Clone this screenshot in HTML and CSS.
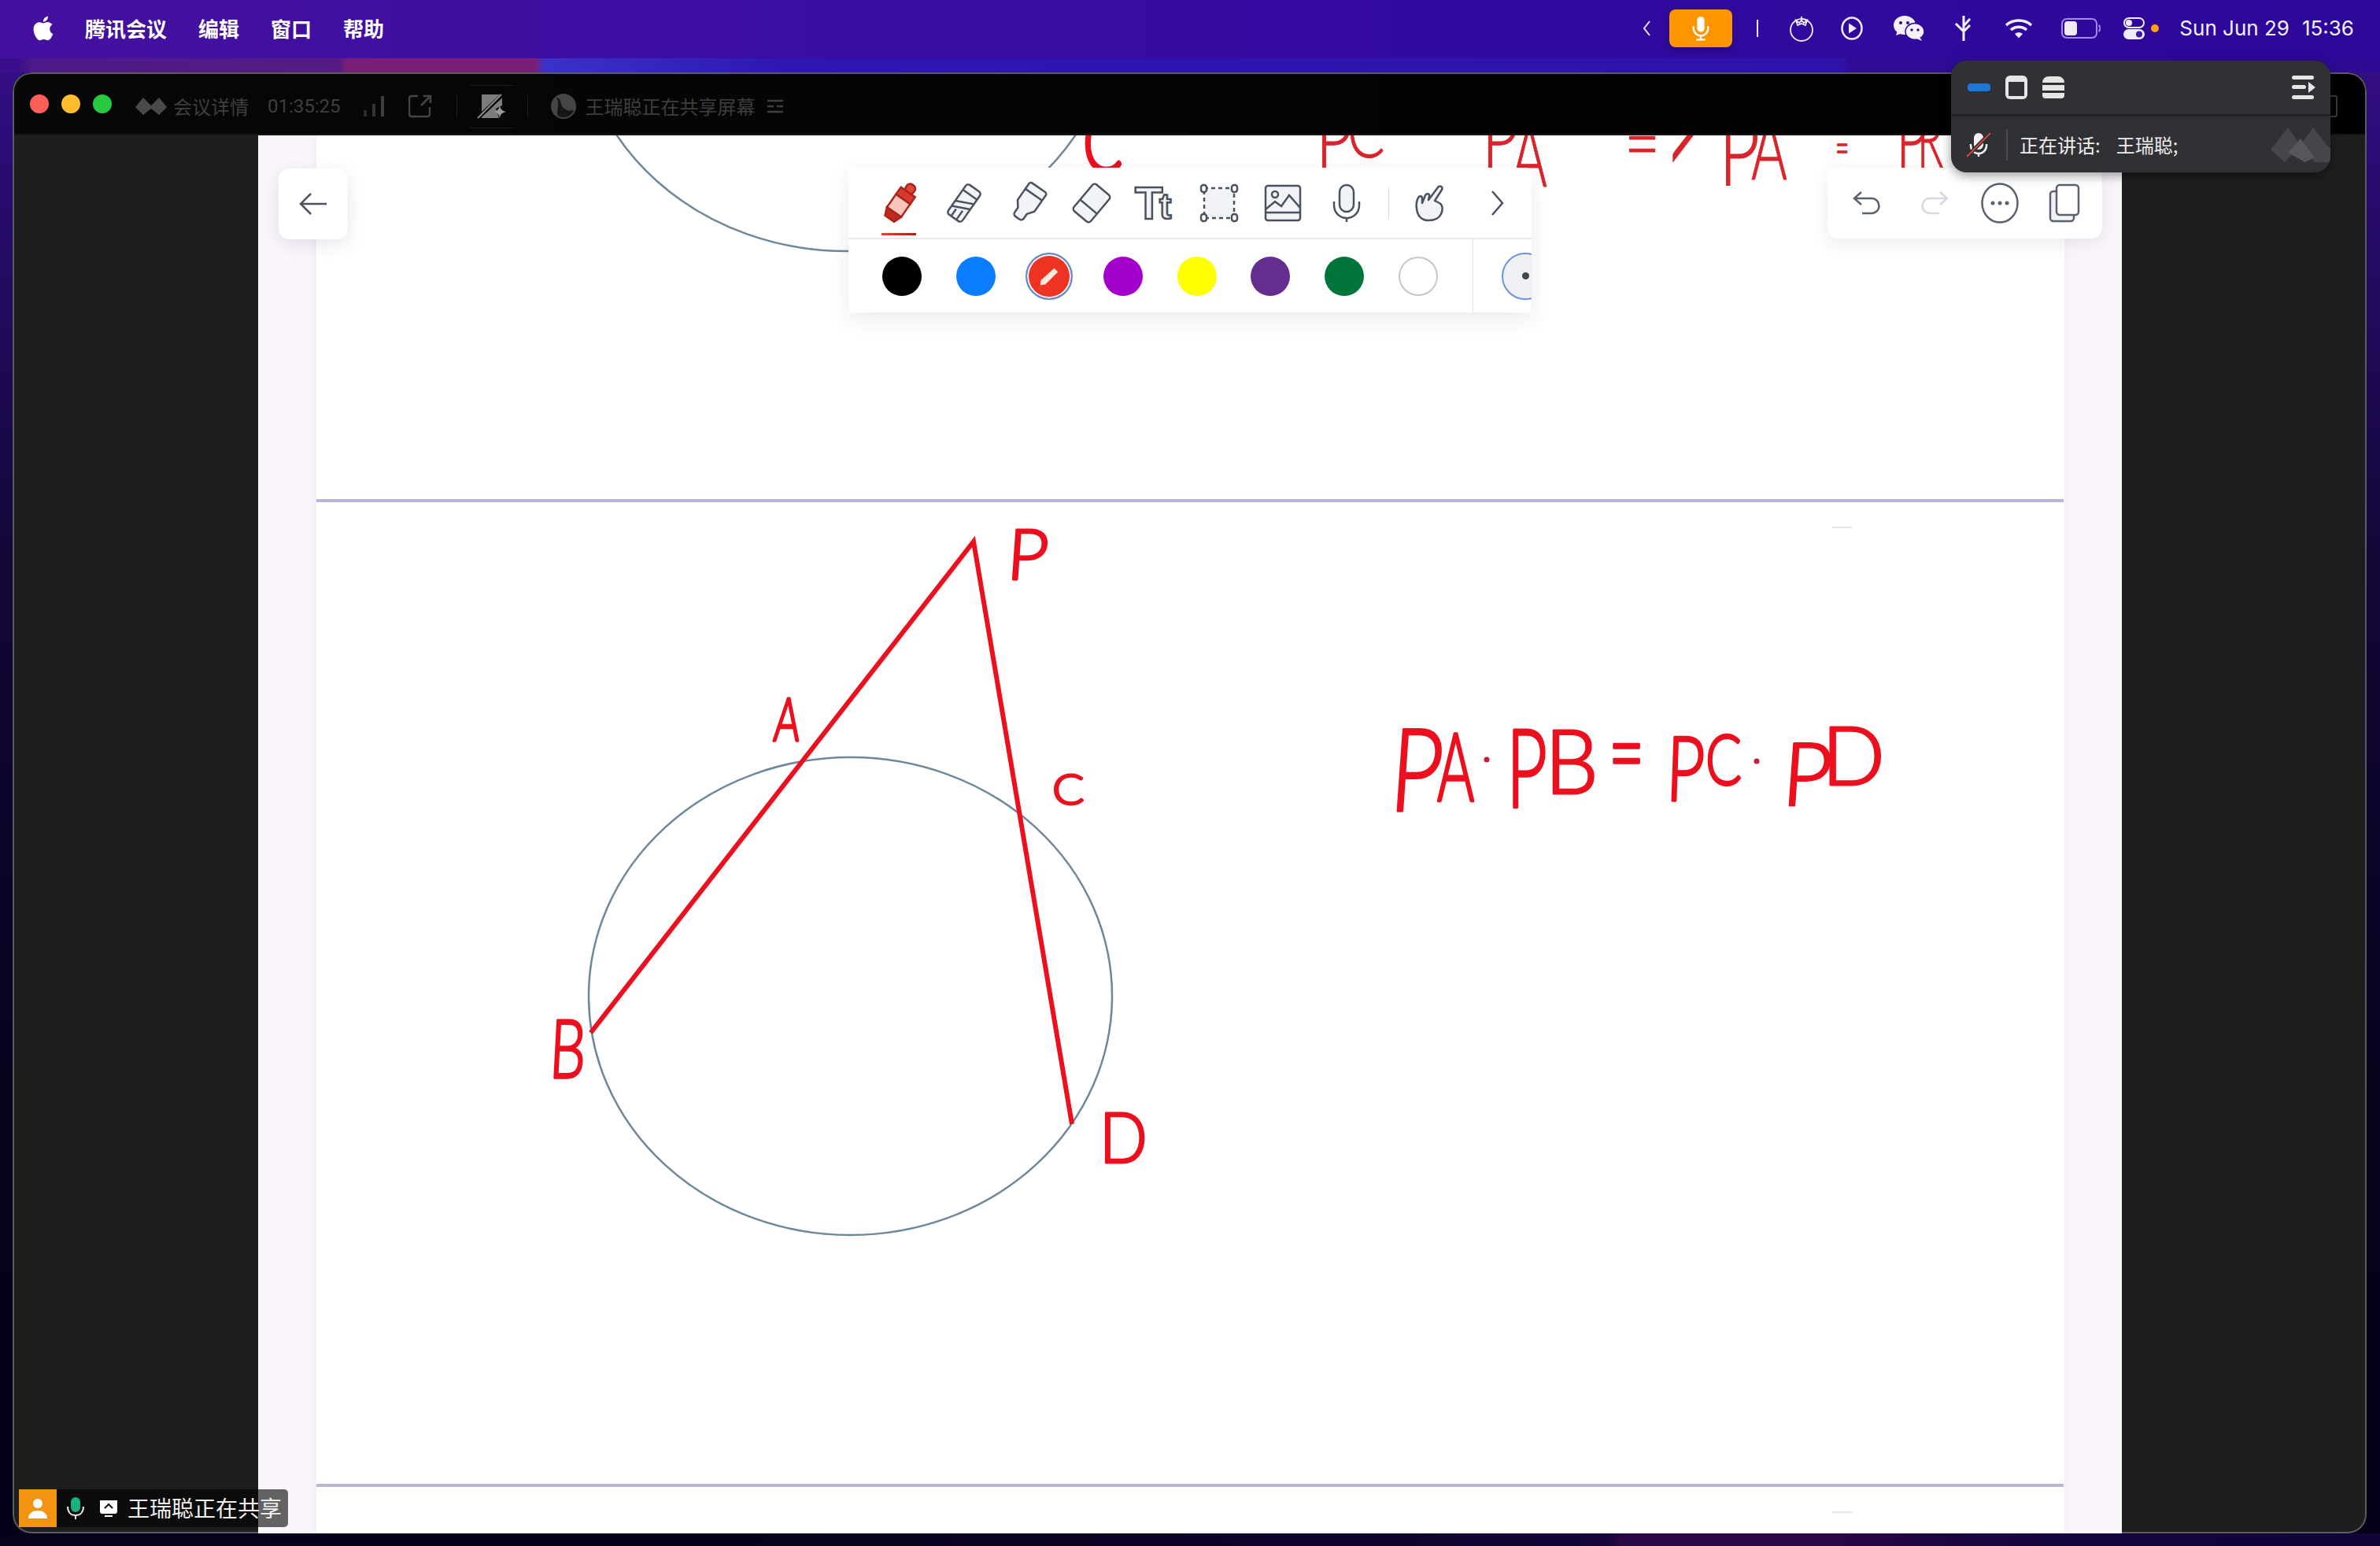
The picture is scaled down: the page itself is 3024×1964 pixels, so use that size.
FILE: index.html
```html
<!DOCTYPE html>
<html lang="zh">
<head>
<meta charset="utf-8">
<title>腾讯会议</title>
<link rel="stylesheet" href="styles.css">
</head>
<body>
<header class="menubar">
  <nav class="menu-left">
    <svg class="apple" viewBox="3 1.5 18 21"><path fill="#fff" d="M18.71 19.5c-.83 1.24-1.71 2.45-3.05 2.47-1.34.03-1.77-.79-3.29-.79-1.53 0-2 .77-3.27.82-1.31.05-2.3-1.32-3.14-2.53C4.25 17 2.94 12.45 4.7 9.39c.87-1.52 2.43-2.48 4.12-2.51 1.28-.02 2.5.87 3.29.87.78 0 2.26-1.07 3.8-.91.65.03 2.47.26 3.64 1.98-.09.06-2.17 1.28-2.15 3.81.03 3.02 2.65 4.03 2.68 4.04-.03.07-.42 1.44-1.38 2.83M13 3.5c.73-.83 1.94-1.46 2.94-1.5.13 1.17-.34 2.35-1.04 3.19-.69.85-1.83 1.51-2.95 1.42-.15-1.15.41-2.35 1.05-3.11z"/></svg>
    <span class="menu-app">腾讯会议</span><span class="menu-item">编辑</span><span class="menu-item">窗口</span><span class="menu-item">帮助</span>
  </nav>
  <div class="menu-right">
    <svg class="st st-chev" viewBox="0 0 12 24"><path d="M10 3 3 12l7 9" fill="none" stroke="#e8e4f6" stroke-width="2"/></svg>
    <div class="mic-pill"><svg class="mic-pill-icon" viewBox="0 0 28 34"><rect x="9" y="1" width="10" height="21" rx="5" fill="#fff"/><path d="M4 14v3a10 10 0 0 0 20 0v-3M14 27v5M8 32.500h12" fill="none" stroke="#fff" stroke-width="2.500"/></svg></div>
    <span class="st-bar"></span>
    <svg class="st st-tomato" viewBox="0 0 32 34"><g fill="none" stroke="#f0ecfa" stroke-width="1.800"><circle cx="16" cy="19" r="14"/><path d="M16 2v6M9 7l4 3 3-3 3 3 4-3-2 6-5-2-5 2z"/></g></svg>
    <svg class="st st-play" viewBox="0 0 28 30"><ellipse cx="14" cy="15" rx="12.500" ry="13.500" fill="none" stroke="#f0ecfa" stroke-width="2.500"/><path d="M10 8.500 20 15l-10 6.500z" fill="#f0ecfa"/></svg>
    <svg class="st st-wechat" viewBox="0 0 40 34"><ellipse cx="15" cy="13" rx="14" ry="12" fill="#f4f1fb"/><path d="m6 20-2 6 8-3z" fill="#f4f1fb"/><ellipse cx="28" cy="21" rx="12" ry="10.500" fill="#f4f1fb" stroke="#2e0798" stroke-width="1.500"/><path d="m34 28 3 5-7-3z" fill="#f4f1fb"/><circle cx="10" cy="10" r="2" fill="#2e0798"/><circle cx="19" cy="10" r="2" fill="#2e0798"/><circle cx="24" cy="19" r="1.700" fill="#2e0798"/><circle cx="32" cy="19" r="1.700" fill="#2e0798"/></svg>
    <svg class="st st-fork" viewBox="0 0 26 34"><path d="M13 1v32M13 14 21 5M13 21 21 13M13 21 3 11" fill="none" stroke="#f4f1fb" stroke-width="3"/></svg>
    <svg class="st st-wifi" viewBox="0 0 36 26"><g fill="none" stroke="#f4f1fb" stroke-width="3.500"><path d="M2 9c9-8 23-8 32 0"/><path d="M8 15c6-5 14-5 20 0"/></g><path d="M13 20c3-2.500 7-2.500 10 0l-5 5.500z" fill="#f4f1fb"/></svg>
    <svg class="st st-battery" viewBox="0 0 50 26"><rect x="1" y="1" width="44" height="24" rx="6" fill="none" stroke="#9f8be8" stroke-width="2"/><rect x="4" y="4" width="16" height="18" rx="4" fill="#eeeaf8"/><path d="M47.500 9a5 5 0 0 1 0 8" fill="none" stroke="#9f8be8" stroke-width="2"/></svg>
    <svg class="st st-toggle" viewBox="0 0 27 28"><rect x="1" y="1" width="25" height="12" rx="6" fill="none" stroke="#f0ecfa" stroke-width="2"/><circle cx="7" cy="7" r="4" fill="#f0ecfa"/><rect y="15" width="27" height="13" rx="6.500" fill="#f0ecfa"/><circle cx="20" cy="21.500" r="4" fill="#3a1aa6"/></svg>
    <span class="st-dot"></span>
    <time class="clock"><span>Sun Jun 29</span><span>15:36</span></time>
  </div>
</header>

<div class="wallstrip"></div>

<main class="window">
  <div class="titlebar">
    <span class="light light-red"></span><span class="light light-yellow"></span><span class="light light-green"></span>
    <svg class="tb-logo" viewBox="0 0 40 22"><path d="M0 12 10 0l10 10L30 0l10 12-10 10-10-8-10 8z" fill="#4a4a4a"/></svg>
    <span class="tb-label">会议详情</span>
    <span class="tb-time">01:35:25</span>
    <svg class="tb-signal" viewBox="0 0 27 26"><rect y="18" width="4" height="8" fill="#2a2a2a"/><rect x="11" y="10" width="4" height="16" fill="#343434"/><rect x="22" width="4" height="26" fill="#3e3e3e"/></svg>
    <svg class="tb-share" viewBox="0 0 30 30"><path d="M12 2H4a3 3 0 0 0-3 3v20a3 3 0 0 0 3 3h20a3 3 0 0 0 3-3v-9M16 14 28 2M19 2h9v9" fill="none" stroke="#444" stroke-width="2.500"/></svg>
    <span class="tb-sep tb-sep-a"></span>
    <span class="tb-focus"><svg class="tb-focus-icon" viewBox="0 0 38 32"><path d="M6 1h26v14l-8 4 4 12H6z" fill="#7c7c7c"/><path d="M1 31 33 1" stroke="#050505" stroke-width="5"/><path d="M1 31 31 1" stroke="#8c8c8c" stroke-width="2"/><path d="M29 15c1 5 3 7 8 8-5 1-7 3-8 8-1-5-3-7-8-8 5-1 7-3 8-8z" fill="#9a9a9a"/></svg></span>
    <span class="tb-sep tb-sep-b"></span>
    <svg class="tb-avatar" viewBox="0 0 34 34"><circle cx="17" cy="17" r="16" fill="#454545"/><path d="M8 6c7 0 4 10 10 14s9 2 12 2c-3 8-13 12-20 7-3-6 3-14-2-23z" fill="#161616"/></svg>
    <span class="tb-share-label">王瑞聪正在共享屏幕</span>
    <svg class="tb-more" viewBox="0 0 20 18"><path d="M0 2h20M0 9h8M12 9h8M0 16h20" stroke="#3f3f3f" stroke-width="2.500"/></svg>
    <span class="tb-full"></span>
  </div>

  <div class="body-row">
    <aside class="side"></aside>
    <section class="stage">
      <div class="page"></div>

      <svg class="board" viewBox="328 172 2368 1776">
        <line class="rule" x1="402" y1="636" x2="2622" y2="636"/>
        <line class="rule" x1="402" y1="1887" x2="2622" y2="1887"/>
        <line class="ghost" x1="2328" y1="670" x2="2353" y2="670"/>
        <line class="ghost" x1="2328" y1="1921" x2="2353" y2="1921"/>
        <ellipse class="circle" cx="1075" cy="15" rx="340" ry="304"/>
        <ellipse class="circle" cx="1080.500" cy="1265.500" rx="332.500" ry="303.500"/>
        <path class="seg" d="M750.500 1312 1237 688 1362 1428"/>
        <g class="ink">
          <text transform="translate(1278 736) skewX(-4) scale(.9 .89)">P</text>
          <text transform="translate(982 941) skewX(-4) scale(.5 .76)">A</text>
          <text transform="translate(1337 1022) scale(.6 .53)">C</text>
          <text transform="translate(697 1369) skewX(-3) scale(.72 1.03)">B</text>
          <text transform="translate(1397 1477) scale(.8 .89)">D</text>
          <text transform="translate(1764 1030) skewX(-4) scale(1.14 1.46)">P</text>
          <text transform="translate(1826 1017) scale(.72 1.21)">A</text>
          <text transform="translate(1914 1025) scale(.9 1.39)">P</text>
          <text transform="translate(1963 1008) scale(1.07 1.13)">B</text>
          <text transform="translate(2044 998) scale(.78 1.2)">=</text>
          <text transform="translate(2116 1017) skewX(-2) scale(.84 1.14)">P</text>
          <text transform="translate(2167 997) scale(.68 .89)">C</text>
          <text transform="translate(2263 1023) skewX(-4) scale(1.07 1.11)">P</text>
          <text transform="translate(2315 997) scale(1.05 1.03)">D</text>
        </g>
        <circle class="ink-dot" cx="1889" cy="965" r="3.500"/>
        <circle class="ink-dot" cx="2232" cy="967" r="3.500"/>
        <g class="ink ink-thin">
          <text transform="translate(1672 213) scale(.8 1)">P</text>
          <text transform="translate(1712 200) scale(.7 .9)">C</text>
          <text transform="translate(1883 213) scale(.8 1)">P</text>
          <text transform="translate(1920 237) scale(.7 1.1)">A</text>
          <text transform="translate(2064 217) scale(.78 1)">=</text>
          <text transform="translate(2115 236) scale(.9 2.3)">&gt;</text>
          <text transform="translate(2184 235) scale(.9 1.2)">P</text>
          <text transform="translate(2225 228) scale(.7 1.1)">A</text>
          <text transform="translate(2332 208) scale(.3 .6)">=</text>
          <text transform="translate(2409 213) scale(.7 1)">P</text>
          <text transform="translate(2436 213) scale(.55 1)">R</text>
        </g>
        <g class="ink ink-bold">
          <text transform="translate(1376 218) scale(.74 1)">C</text>
        </g>
      </svg>

      <div class="back-btn"><svg class="back-icon" viewBox="0 0 36 30"><path d="M15 2 2 15l13 13M2 15h33" fill="none" stroke="#4a5260" stroke-width="2.500"/></svg></div>

      <div class="toolbar">
        <div class="tool-row">
          <span class="tool tool-active">
            <svg class="tool-icon" viewBox="0 0 48 48"><g transform="rotate(35 24 24)" stroke="#a9251c" stroke-width="2.500"><rect x="18" y="-4" width="12" height="12" rx="5" fill="#e0473a"/><rect x="13" y="7" width="22" height="11" fill="#d8382c"/><rect x="13" y="18" width="22" height="20" fill="#f8c4bc"/><path d="M13 38h22l-4 10H17z" fill="#c22a20"/></g></svg>
          </span>
          <svg class="tool-icon" viewBox="0 0 48 48"><g transform="rotate(35 24 24)" fill="#f1f3f7" stroke="#4a5260" stroke-width="2.500"><rect x="13" y="1" width="22" height="46" rx="4"/><path d="M13 11h22M13 36l22-10M13 28l22-10M20 36v11M28 33v14"/></g></svg>
          <svg class="tool-icon" viewBox="0 0 48 48"><g transform="rotate(35 24 24)" fill="#f1f3f7" stroke="#4a5260" stroke-width="2.500"><path d="M14 0h20a3 3 0 0 1 3 3v25l-6 8v7a4 4 0 0 1-4 4h-6a4 4 0 0 1-4-4v-7l-6-8V3a3 3 0 0 1 3-3z"/><path d="M11 11h26"/></g></svg>
          <svg class="tool-icon" viewBox="0 0 48 48"><g transform="rotate(40 24 24)" fill="#f1f3f7" stroke="#4a5260" stroke-width="2.500"><rect x="10" y="2" width="28" height="44" rx="4"/><path d="M10 30h28"/></g></svg>
          <svg class="tool-icon" viewBox="0 0 48 48"><text class="tt-big" x="-2" y="44">T</text><text class="tt-small" x="29" y="44">t</text></svg>
          <svg class="tool-icon" viewBox="0 0 48 48"><rect x="5" y="5" width="38" height="38" fill="#f1f3f7" stroke="#4a5260" stroke-width="2.500" stroke-dasharray="5 4"/><g fill="#fff" stroke="#4a5260" stroke-width="2.500"><rect x="1" y="1" width="7" height="9" rx="3"/><rect x="40" y="1" width="7" height="9" rx="3"/><rect x="1" y="38" width="7" height="9" rx="3"/><rect x="40" y="38" width="7" height="9" rx="3"/></g></svg>
          <svg class="tool-icon" viewBox="0 0 48 48"><rect x="2" y="2" width="44" height="44" rx="3" fill="#f1f3f7" stroke="#4a5260" stroke-width="2.500"/><circle cx="14" cy="13" r="4" fill="none" stroke="#4a5260" stroke-width="2.500"/><path d="m2 32 12-10 8 6 10-14 14 16M2 36h44" fill="none" stroke="#4a5260" stroke-width="2.500"/></svg>
          <svg class="tool-icon" viewBox="0 0 48 48"><rect x="15" y="1" width="18" height="34" rx="9" fill="#f1f3f7" stroke="#4a5260" stroke-width="2.500"/><path d="M8 22v5a16 16 0 0 0 32 0v-5M24 43v5" fill="none" stroke="#4a5260" stroke-width="2.500"/></svg>
          <span class="tool-sep"></span>
          <svg class="tool-icon" viewBox="0 0 48 48"><path d="M21 46C12 46 7 40 6 31c-1-5 0-10 2-14 2-3 5-2 5 1v6l4-10c1-3 6-2 5 1l-1 5L33 4c2-3 7-1 5 3L29 21l6 3c5 3 4 10 2 14-3 6-8 8-16 8z" fill="#f1f3f7" stroke="#4a5260" stroke-width="2.500" stroke-linejoin="round"/></svg>
          <svg class="tool-next" viewBox="0 0 24 36"><path d="m6 3 13 15L6 33" fill="none" stroke="#4a5260" stroke-width="2.500"/></svg>
        </div>
        <div class="color-row">
          <span class="swatch swatch-black"></span>
          <span class="swatch swatch-blue"></span>
          <span class="swatch-selected"><svg class="swatch-pen" viewBox="0 0 30 30"><path d="M22 4 27 9 10 26 3 27 4 20z" fill="#fbe9dd"/></svg></span>
          <span class="swatch swatch-violet"></span>
          <span class="swatch swatch-yellow"></span>
          <span class="swatch swatch-purple"></span>
          <span class="swatch swatch-green"></span>
          <span class="swatch swatch-white"></span>
          <span class="color-sep"></span>
          <span class="size-dot"><span class="size-dot-core"></span></span>
        </div>
      </div>

      <div class="actions">
        <svg class="action-icon" viewBox="0 0 40 40"><path d="M12 6 3 14l9 8M3 14h22a9 9 0 0 1 0 19H13" fill="none" stroke="#5a626e" stroke-width="2.500"/></svg>
        <svg class="action-icon" viewBox="0 0 40 40"><path d="m28 6 9 8-9 8M37 14H15a9 9 0 0 0 0 19h12" fill="none" stroke="#d6d9de" stroke-width="2.500"/></svg>
        <svg class="action-icon action-more" viewBox="0 0 48 52"><ellipse cx="24" cy="26" rx="22.500" ry="24.500" fill="none" stroke="#5a626e" stroke-width="2.500"/><circle cx="15" cy="26" r="2.500" fill="#5a626e"/><circle cx="24" cy="26" r="2.500" fill="#5a626e"/><circle cx="33" cy="26" r="2.500" fill="#5a626e"/></svg>
        <svg class="action-icon action-copy" viewBox="0 0 40 50"><rect x="2" y="10" width="30" height="38" rx="4" fill="#f1f3f7" stroke="#5a626e" stroke-width="2.500"/><rect x="10" y="2" width="28" height="38" rx="4" fill="#fff" stroke="#5a626e" stroke-width="2.500"/></svg>
      </div>
    </section>
    <aside class="side side-right"></aside>
  </div>
</main>

<div class="wallfoot"></div>

<aside class="popover">
  <div class="pop-top">
    <span class="pop-min"></span>
    <svg class="pop-view" viewBox="0 0 28 30"><rect width="28" height="30" rx="6" fill="#e6e6e6"/><rect x="4" y="8" width="20" height="18" fill="#303134"/></svg>
    <svg class="pop-view" viewBox="0 0 28 30"><path d="M0 9a8 8 0 0 1 8-8h12a8 8 0 0 1 8 8zM0 12h28v7H0zM0 22h28v3a4 4 0 0 1-4 4H4a4 4 0 0 1-4-4z" fill="#e6e6e6"/></svg>
    <svg class="pop-list" viewBox="0 0 30 30"><rect width="28" height="5" rx="2.500" fill="#e6e6e6"/><rect y="12" width="18" height="5" rx="2.500" fill="#e6e6e6"/><rect y="25" width="28" height="5" rx="2.500" fill="#e6e6e6"/><path d="m21 8 9 7-9 7z" fill="#e6e6e6"/></svg>
  </div>
  <div class="pop-bottom">
    <svg class="pop-mic" viewBox="0 0 34 32"><rect x="11" y="1" width="12" height="21" rx="6" fill="#f2f2f2"/><path d="M7 15v2a10 10 0 0 0 20 0v-2M17 27v4" fill="none" stroke="#f2f2f2" stroke-width="2.500"/><path d="M2 31 32 1" stroke="#303134" stroke-width="5"/><path d="M2 31 32 1" stroke="#d2453a" stroke-width="2"/></svg>
    <span class="pop-sep"></span>
    <span class="pop-label">正在讲话:</span>
    <span class="pop-name">王瑞聪;</span>
    <svg class="pop-mark" viewBox="0 0 76 44"><path d="M0 28 22 0l16 22-20 22zM38 22 54 0l22 28v16l-20 0z" fill="#44464a"/><path d="M22 32 38 14l18 24-12 6z" fill="#55575b"/></svg>
  </div>
</aside>

<aside class="share-badge">
  <span class="badge-person"><svg class="badge-person-icon" viewBox="0 0 26 26"><circle cx="13" cy="7" r="6" fill="#fff"/><path d="M1 26c0-7 6-10 12-10s12 3 12 10z" fill="#fff"/></svg></span>
  <svg class="badge-mic" viewBox="0 0 22 28"><rect x="5" y="0" width="12" height="19" rx="6" fill="#19b27f"/><path d="M1 12c0 7 4 11 10 11s10-4 10-11M11 23v5" fill="none" stroke="#e8e8e8" stroke-width="2"/></svg>
  <svg class="badge-screen" viewBox="0 0 24 22"><path d="M1 1h22a1 1 0 0 1 0 1v13a3 3 0 0 1-3 3H4a3 3 0 0 1-3-3z" fill="#fff"/><path d="m7 11 5-5 5 5" fill="none" stroke="#111" stroke-width="2"/><path d="M7 21h10" stroke="#fff" stroke-width="2"/></svg>
  <span class="badge-text">王瑞聪正在共享</span>
</aside>
</body>
</html>
```

FILE: styles.css
```css
* { box-sizing: border-box; }
html, body { margin: 0; padding: 0; }
body {
  position: relative;
  width: 3024px;
  height: 1964px;
  overflow: hidden;
  display: flex;
  flex-direction: column;
  font-family: "Noto Sans CJK SC", "Noto Sans", sans-serif;
  background: linear-gradient(180deg, #3b0f92 0, #2a0c74 200px, #130738 700px, #07021d 1400px, #060118 100%);
}
svg { display: block; flex-shrink: 0; }

/* menu bar */
.menubar {
  height: 74px;
  flex-shrink: 0;
  display: flex;
  align-items: center;
  justify-content: space-between;
  padding: 0 33px 2px 41px;
  background: linear-gradient(90deg, #45109f 0, #3c0ea2 900px, #330aa0 1800px, #2d0799 100%);
  color: #fff;
}
.menu-left, .menu-right { display: flex; align-items: center; }
.apple { width: 28px; height: 32px; margin-right: 39px; }
.menu-app, .menu-item { font-size: 26px; font-weight: 700; line-height: 32px; }
.menu-item { margin-left: 40px; }
.menu-app + .menu-item { margin-left: 40px; }
.st-chev { width: 12px; height: 24px; }
.mic-pill {
  width: 80px; height: 48px; margin-left: 23px;
  display: flex; align-items: center; justify-content: center;
  background: #ff9500; border-radius: 8px;
  box-shadow: 0 4px 10px rgba(10, 0, 60, .35);
}
.mic-pill-icon { width: 26px; height: 32px; }
.st-bar { width: 2px; height: 22px; margin-left: 31px; background: #e8e4f6; }
.st-tomato { width: 32px; height: 34px; margin-left: 39px; }
.st-play { width: 28px; height: 30px; margin-left: 34px; }
.st-wechat { width: 40px; height: 34px; margin-left: 38px; }
.st-fork { width: 26px; height: 34px; margin-left: 37px; }
.st-wifi { width: 36px; height: 26px; margin-left: 39px; }
.st-battery { width: 50px; height: 26px; margin-left: 36px; }
.st-toggle { width: 27px; height: 28px; margin-left: 29px; }
.st-dot { width: 10px; height: 10px; margin-left: 8px; border-radius: 50%; background: #ff9f0a; }
.clock {
  display: flex; gap: 16px; margin-left: 26px;
  font-family: Inter, "Liberation Sans", sans-serif;
  font-size: 26px; color: #f4f2fb; line-height: 32px;
}

/* wallpaper sliver between the menu bar and the window */
.wallstrip {
  height: 18px;
  flex-shrink: 0;
  background: linear-gradient(90deg, #3a0d8c 0, #3a0d8c 24px, #4c1a88 40px, #551c84 430px, #7a1f78 440px, #7a1f78 680px, #3a32c8 692px, #2e16b2 1000px, #2f12aa 2340px, #2f0c96 2350px, #2e0a92 100%);
}

/* window */
.window {
  position: relative;
  height: 1856px;
  flex-shrink: 0;
  margin: 0 17px 0 16px;
  display: flex;
  flex-direction: column;
  border-radius: 24px;
  overflow: hidden;
  background: #1e1e1e;
}
.window::after {
  content: "";
  position: absolute;
  inset: 0;
  z-index: 1;
  border: 2px solid #5c5c5c;
  border-radius: 24px;
}
.titlebar {
  height: 80px;
  flex-shrink: 0;
  display: flex;
  align-items: center;
  padding: 8px 0 0 22px;
  border-bottom: 2px solid #161616;
  background: linear-gradient(90deg, #070707 0, #040404 1500px, #000 100%);
  color: #3e3e3e;
  font-size: 24px;
}
.light { width: 24px; height: 24px; border-radius: 50%; margin: 0 16px 7px 0; }
.light-red { background: #ff5f57; }
.light-yellow { background: #febc2e; }
.light-green { background: #28c840; margin-right: 0; }
.tb-logo { width: 40px; height: 22px; margin-left: 30px; }
.tb-label { margin-left: 8px; line-height: 32px; }
.tb-time { margin-left: 24px; font-family: Roboto, sans-serif; font-size: 24px; }
.tb-signal { width: 27px; height: 26px; margin-left: 29px; }
.tb-share { width: 30px; height: 30px; margin-left: 30px; }
.tb-sep { width: 1px; height: 28px; background: #1e1e1e; }
.tb-sep-a { margin-left: 31px; }
.tb-focus {
  width: 89px; height: 55px;
  display: flex; align-items: center; justify-content: center;
  background:
    linear-gradient(#1c1c1c, #1c1c1c) center top / 57px 1px no-repeat,
    linear-gradient(#1c1c1c, #1c1c1c) center bottom / 57px 1px no-repeat;
}
.tb-focus-icon { width: 38px; height: 32px; }
.tb-avatar { width: 34px; height: 34px; margin-left: 28px; }
.tb-share-label { margin-left: 11px; line-height: 32px; }
.tb-more { width: 20px; height: 18px; margin-left: 15px; }
.tb-full {
  width: 30px; height: 28px;
  margin-left: auto; margin-right: 37px;
  border: 2px solid #3c3c3c; border-left: 0; border-radius: 3px;
}

.body-row { flex: 1; display: flex; min-height: 0; }
.side { width: 312px; flex-shrink: 0; background: #1e1e1e; }
.side-right { width: 311px; }
.stage {
  position: relative;
  z-index: 2;
  width: 2368px;
  flex-shrink: 0;
  display: flex;
  padding: 0 73px 0 74px;
  background: #faf6fc;
  overflow: hidden;
}
.page {
  flex: 1;
  background: #fff;
  box-shadow: 0 0 12px rgba(120, 100, 150, .09);
}

/* whiteboard drawing: a free canvas */
.board { position: absolute; left: 0; top: 0; width: 2368px; height: 1776px; }
.rule { stroke: #b9b7d8; stroke-width: 4; }
.ghost { stroke: #e6e6ea; stroke-width: 2; }
.circle { fill: none; stroke: #6f8899; stroke-width: 2.500; }
.seg { fill: none; stroke: #ec0f1e; stroke-width: 6; stroke-linejoin: miter; }
.ink text {
  font-family: Lato, "Noto Sans", sans-serif;
  font-weight: 300;
  font-size: 100px;
  fill: #ec0f1e;
  stroke: #ec0f1e;
  stroke-width: 3px;
  stroke-linejoin: round;
  vector-effect: non-scaling-stroke;
}
.ink-thin text { stroke-width: 1px; fill: #d9242c; stroke: #d9242c; }
.ink-bold text { stroke-width: 4px; }
.ink-dot { fill: #c81a3a; }

/* floating board controls */
.back-btn {
  position: absolute; left: 26px; top: 42px;
  width: 88px; height: 90px;
  display: flex; align-items: center; justify-content: center;
  background: #fff; border-radius: 14px;
  box-shadow: 0 6px 22px rgba(60, 50, 90, .12);
}
.back-icon { width: 36px; height: 30px; }

.toolbar {
  position: absolute; left: 750px; top: 41px;
  width: 868px; height: 184px;
  display: flex; flex-direction: column;
  background: #fff; border-radius: 6px;
  box-shadow: 0 8px 26px rgba(60, 50, 90, .1);
  overflow: hidden;
}
.tool-row {
  height: 91px; flex-shrink: 0;
  display: flex; align-items: center; gap: 33px;
  padding-left: 42px;
  border-bottom: 2px solid #e8e9ed;
}
.tool { position: relative; display: block; }
.tool-active::after {
  content: ""; position: absolute; left: 0; bottom: -17px;
  width: 44px; height: 3px;
  background: linear-gradient(90deg, #e8402e, #a9251c);
}
.tool-icon { width: 48px; height: 48px; overflow: visible; }
.tt-big, .tt-small {
  font-family: "Liberation Sans", sans-serif;
  font-weight: 700; fill: #f1f3f7; stroke: #4a5260; stroke-width: 2.500px;
}
.tt-big { font-size: 58px; }
.tt-small { font-size: 46px; }
.tool-sep { width: 1px; height: 38px; margin: 0 -4px; background: #d5d7dc; }
.tool-next { width: 24px; height: 36px; margin-left: 15px; }
.color-row {
  flex: 1; min-height: 0;
  display: flex; align-items: center; gap: 43.700px;
  padding-left: 43px;
}
.swatch { width: 50px; height: 50px; flex-shrink: 0; border-radius: 50%; }
.swatch-black { background: #000; }
.swatch-blue { background: #0a7cff; }
.swatch-violet { background: #a400cc; }
.swatch-yellow { background: #ffff00; }
.swatch-purple { background: #662d91; }
.swatch-green { background: #00753a; }
.swatch-white { background: #fff; border: 2px solid #c3c6cd; }
.swatch-selected {
  width: 60px; height: 60px; flex-shrink: 0; margin: 0 -5px;
  display: flex; align-items: center; justify-content: center;
  border-radius: 50%;
  background: #ee3322;
  border: 2px solid #5b8bd6;
  box-shadow: inset 0 0 0 2px #fff;
}
.swatch-pen { width: 28px; height: 28px; }
.color-sep { width: 1px; height: 100%; flex-shrink: 0; background: #e4e5e9; }
.size-dot {
  width: 60px; height: 60px; flex-shrink: 0; margin-left: -7px;
  display: flex; align-items: center; justify-content: center;
  border-radius: 50%;
  background: #eef0f4;
  border: 2px solid #6c93da;
}
.size-dot-core { width: 9px; height: 9px; border-radius: 50%; background: #3f4650; }

.actions {
  position: absolute; left: 1994px; top: 41px;
  width: 349px; height: 90px;
  display: grid;
  grid-template-columns: repeat(4, 84px);
  align-items: center; justify-items: center;
  padding-left: 9px;
  background: #fff; border-radius: 14px;
  box-shadow: 0 6px 22px rgba(60, 50, 90, .1);
}
.action-icon { width: 40px; height: 40px; }
.action-more { width: 48px; height: 52px; }
.action-copy { width: 40px; height: 50px; margin-left: -4px; }

.wallfoot {
  height: 16px;
  flex-shrink: 0;
  background: linear-gradient(100deg, #07021c 0, #060118 900px, #100430 1800px, #14043a 2010px, #2b0644 2030px, #2a0644 2300px, #160540 2500px, #100438 100%);
}

/* speaker popover */
.popover {
  position: absolute; left: 2479px; top: 77px; z-index: 5;
  width: 482px; height: 142px;
  display: flex; flex-direction: column;
  background: #303134;
  border-radius: 20px;
  box-shadow: 0 4px 14px rgba(0, 0, 0, .4);
  overflow: hidden;
  color: #ededed;
}
.pop-top {
  height: 71px; flex-shrink: 0;
  display: flex; align-items: center; gap: 19px;
  padding: 0 19px 0 21px;
  border-bottom: 3px solid #232326;
}
.pop-min { width: 29px; height: 10px; border-radius: 4px; background: #1c77d8; }
.pop-view { width: 28px; height: 30px; }
.pop-list { width: 30px; height: 30px; margin-left: auto; }
.pop-bottom { flex: 1; position: relative; display: flex; align-items: center; padding-left: 18px; font-size: 24px; }
.pop-mic { width: 34px; height: 32px; }
.pop-sep { width: 2px; height: 40px; margin-left: 18px; background: #4a4b4f; }
.pop-label { margin-left: 15px; line-height: 32px; }
.pop-name { margin-left: 20px; line-height: 32px; }
.pop-mark { position: absolute; right: 0; top: 14px; width: 76px; height: 44px; }

/* sharing badge */
.share-badge {
  position: absolute; left: 24px; top: 1892px; z-index: 5;
  width: 342px; height: 48px;
  display: flex; align-items: center;
  background: rgba(0, 0, 0, .6);
  border-radius: 0 5px 5px 0;
  color: #f0f0f0;
}
.badge-person {
  width: 48px; height: 48px; flex-shrink: 0;
  display: flex; align-items: center; justify-content: center;
  background: #f39312;
}
.badge-person-icon { width: 26px; height: 26px; }
.badge-mic { width: 22px; height: 28px; margin-left: 13px; }
.badge-screen { width: 24px; height: 22px; margin-left: 19px; }
.badge-text { margin: 0 0 2px 12px; font-size: 28px; line-height: 36px; white-space: nowrap; }
```
